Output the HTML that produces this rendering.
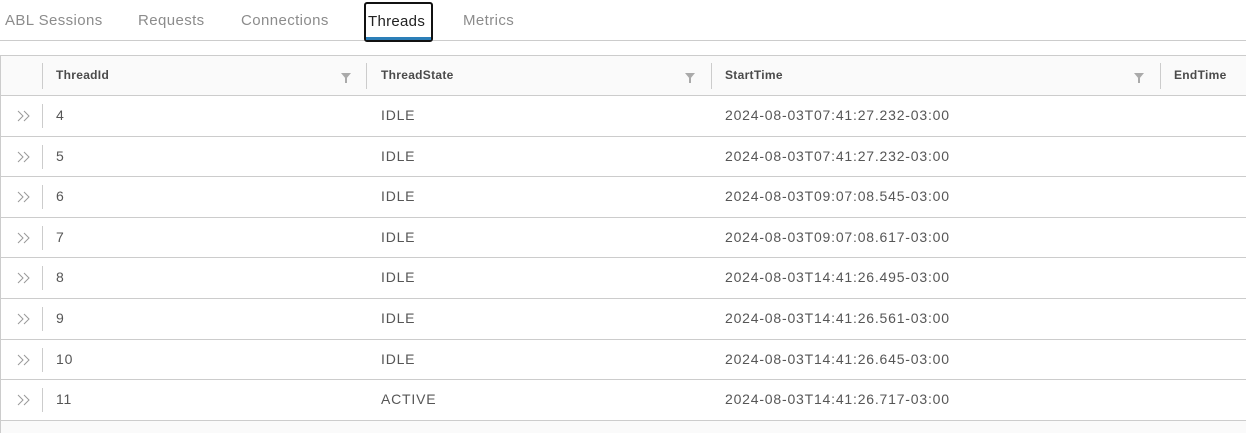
<!DOCTYPE html>
<html><head><style>
body{margin:0;width:1246px;height:432px;overflow:hidden;background:#fff;font-family:"Liberation Sans",sans-serif;color:#565656;position:relative}
.tab{position:absolute;top:12px;font-size:15px;color:#8c8c8c;letter-spacing:0.4px}
.tabline{position:absolute;left:0;top:40px;width:1246px;height:1px;background:#ccc}
.act{position:absolute;left:364px;top:2px;width:65px;height:36px;border:2px solid #111;border-radius:3px;background:#fff}
.act span{position:absolute;left:2px;top:9px;font-size:15px;color:#222;letter-spacing:0.3px}
.act i{position:absolute;left:0;right:0;bottom:0;height:3px;background:#2c7fb8}
.grid{position:absolute;left:0;top:55px;width:1246px;height:377px;border-top:1px solid #ccc;border-left:1px solid #ccc;background:#fafafa}
.hd{position:absolute;left:0;top:0;width:1246px;height:39px;border-bottom:1px solid #ccc}
.hd b{position:absolute;top:12px;font-size:12px;color:#4a4a4a;letter-spacing:0.3px}
.sep{position:absolute;width:1px;background:#ccc}
.filt{position:absolute;top:17px;width:0;height:0;border-left:5px solid transparent;border-right:5px solid transparent;border-top:6px solid #aaa}
.filt:after{content:"";position:absolute;left:-1px;top:-1px;width:2px;height:5px;background:#aaa}
.row{position:absolute;left:0;width:1246px;background:#fff;border-bottom:1px solid #ccc;font-size:14px;letter-spacing:0.8px}
.row span{position:absolute;top:11px}
.row svg{position:absolute;left:16px;top:14px}
</style></head><body>
<div class="tab" style="left:5px">ABL Sessions</div>
<div class="tab" style="left:138px">Requests</div>
<div class="tab" style="left:241px">Connections</div>
<div class="tab" style="left:463px">Metrics</div>
<div class="tabline"></div>
<div class="act"><span>Threads</span><i></i></div>
<div class="grid">
<div class="hd">
<div class="sep" style="left:41px;top:7px;height:26px"></div>
<b style="left:55px">ThreadId</b><div class="filt" style="left:340px"></div>
<div class="sep" style="left:365px;top:7px;height:26px"></div>
<b style="left:380px">ThreadState</b><div class="filt" style="left:684px"></div>
<div class="sep" style="left:710px;top:7px;height:26px"></div>
<b style="left:724px">StartTime</b><div class="filt" style="left:1133px"></div>
<div class="sep" style="left:1159px;top:7px;height:26px"></div>
<b style="left:1173px">EndTime</b>
</div>
</div>
<div id="rows"></div>
<script>
var d=[["4","IDLE","2024-08-03T07:41:27.232-03:00"],["5","IDLE","2024-08-03T07:41:27.232-03:00"],["6","IDLE","2024-08-03T09:07:08.545-03:00"],["7","IDLE","2024-08-03T09:07:08.617-03:00"],["8","IDLE","2024-08-03T14:41:26.495-03:00"],["9","IDLE","2024-08-03T14:41:26.561-03:00"],["10","IDLE","2024-08-03T14:41:26.645-03:00"],["11","ACTIVE","2024-08-03T14:41:26.717-03:00"]];
var h="";
d.forEach(function(r,i){var t=96+Math.round(i*40.6);var nt=96+Math.round((i+1)*40.6);
h+='<div class="row" style="top:'+t+'px;height:'+(nt-t-1)+'px;left:1px;width:1245px"><svg width="14" height="12" viewBox="0 0 14 12"><path d="M1 1l5 5-5 5M7 1l5 5-5 5" fill="none" stroke="#999" stroke-width="1"/></svg><div class="sep" style="left:41px;top:8px;height:24px"></div><span style="left:55px">'+r[0]+'</span><span style="left:380px">'+r[1]+'</span><span style="left:724px">'+r[2]+'</span></div>';});
document.getElementById("rows").innerHTML=h;
</script>
</body></html>
